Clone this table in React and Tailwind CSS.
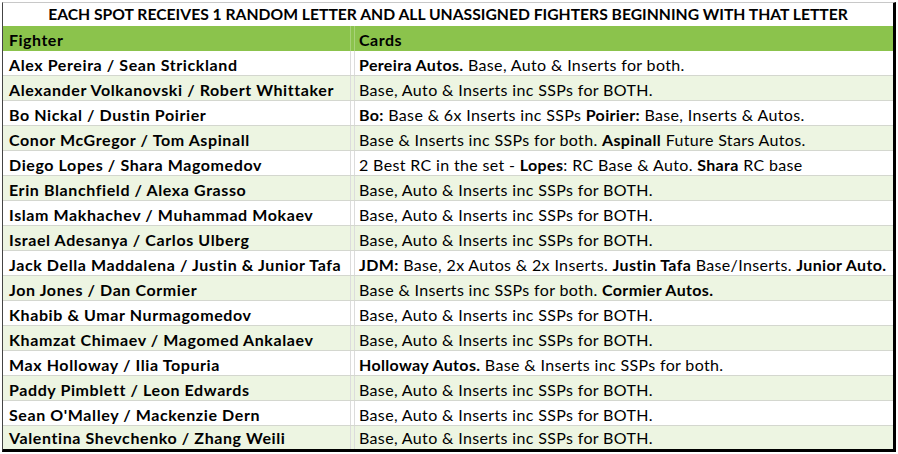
const rows = [
  { fighter: "Alex Pereira / Sean Strickland", cards: [["b", "Pereira Autos."], ["n", " Base, Auto & Inserts for both."]] },
  { fighter: "Alexander Volkanovski / Robert Whittaker", cards: [["n", "Base, Auto & Inserts inc SSPs for BOTH."]] },
  { fighter: "Bo Nickal / Dustin Poirier", cards: [["b", "Bo:"], ["n", " Base & 6x Inserts inc SSPs "], ["b", "Poirier:"], ["n", " Base, Inserts & Autos."]] },
  { fighter: "Conor McGregor / Tom Aspinall", cards: [["n", "Base & Inserts inc SSPs for both. "], ["b", "Aspinall"], ["n", " Future Stars Autos."]] },
  { fighter: "Diego Lopes / Shara Magomedov", cards: [["n", "2 Best RC in the set - "], ["b", "Lopes"], ["n", ": RC Base & Auto. "], ["b", "Shara"], ["n", " RC base"]] },
  { fighter: "Erin Blanchfield / Alexa Grasso", cards: [["n", "Base, Auto & Inserts inc SSPs for BOTH."]] },
  { fighter: "Islam Makhachev / Muhammad Mokaev", cards: [["n", "Base, Auto & Inserts inc SSPs for BOTH."]] },
  { fighter: "Israel Adesanya / Carlos Ulberg", cards: [["n", "Base, Auto & Inserts inc SSPs for BOTH."]] },
  { fighter: "Jack Della Maddalena / Justin & Junior Tafa", cards: [["b", "JDM:"], ["n", " Base, 2x Autos & 2x Inserts. "], ["b", "Justin Tafa"], ["n", " Base/Inserts. "], ["b", "Junior Auto."]] },
  { fighter: "Jon Jones / Dan Cormier", cards: [["n", "Base & Inserts inc SSPs for both. "], ["b", "Cormier Autos."]] },
  { fighter: "Khabib & Umar Nurmagomedov", cards: [["n", "Base, Auto & Inserts inc SSPs for BOTH."]] },
  { fighter: "Khamzat Chimaev / Magomed Ankalaev", cards: [["n", "Base, Auto & Inserts inc SSPs for BOTH."]] },
  { fighter: "Max Holloway / Ilia Topuria", cards: [["b", "Holloway Autos."], ["n", " Base & Inserts inc SSPs for both."]] },
  { fighter: "Paddy Pimblett / Leon Edwards", cards: [["n", "Base, Auto & Inserts inc SSPs for BOTH."]] },
  { fighter: "Sean O'Malley / Mackenzie Dern", cards: [["n", "Base, Auto & Inserts inc SSPs for BOTH."]] },
  { fighter: "Valentina Shevchenko / Zhang Weili", cards: [["n", "Base, Auto & Inserts inc SSPs for BOTH."]] },
]

export default function App() {
  return (
    <div className="w-[898px] h-[454px] bg-white pt-[2px] pl-[2px] text-black" style={{ fontFamily: "Lato, 'Noto Sans', sans-serif" }}>
      <div className="w-[894px] h-[450px] overflow-hidden border-l border-t border-l-[#444] border-t-[#c8c8c8] border-r-[3px] border-b-[3px] border-r-black border-b-black text-[16px] leading-none">
        <div className="h-[23px] flex items-center justify-center font-bold text-[15.7px]">
          EACH SPOT RECEIVES 1 RANDOM LETTER AND ALL UNASSIGNED FIGHTERS BEGINNING WITH THAT LETTER
        </div>
        <div className="grid grid-cols-[348px_4px_1fr] h-[25px] bg-[#8bc34c] font-bold tracking-[0.5px]">
          <div className="flex items-center pt-[3px] pl-[6px] border-r border-r-[#a9d27a]">Fighter</div>
          <div className="border-r border-r-[#a9d27a]" />
          <div className="flex items-center pt-[3px] pl-[4px]">Cards</div>
        </div>
        {rows.map((row, i) => {
          const last = i === rows.length - 1
          return (
            <div key={i} className={`grid grid-cols-[348px_4px_1fr] h-[25px] border-b border-b-[#d4d7cf] ${i % 2 === 1 ? "bg-[#edf5e2]" : "bg-white"}`}>
              <div className={`flex items-center ${last ? "pt-0" : "pt-[4px]"} pl-[6px] font-bold tracking-[0.6px] border-r border-r-[#dcdcdc] whitespace-nowrap`}>{row.fighter}</div>
              <div className="border-r border-r-[#dcdcdc]" />
              <div className={`flex items-center ${last ? "pt-0" : "pt-[4px]"} pl-[4px] tracking-[0.35px] whitespace-pre`}>
                {row.cards.map(([t, s], j) => (
                  <span key={j} className={t === "b" ? "font-bold" : ""}>{s}</span>
                ))}
              </div>
            </div>
          )
        })}
      </div>
    </div>
  )
}
